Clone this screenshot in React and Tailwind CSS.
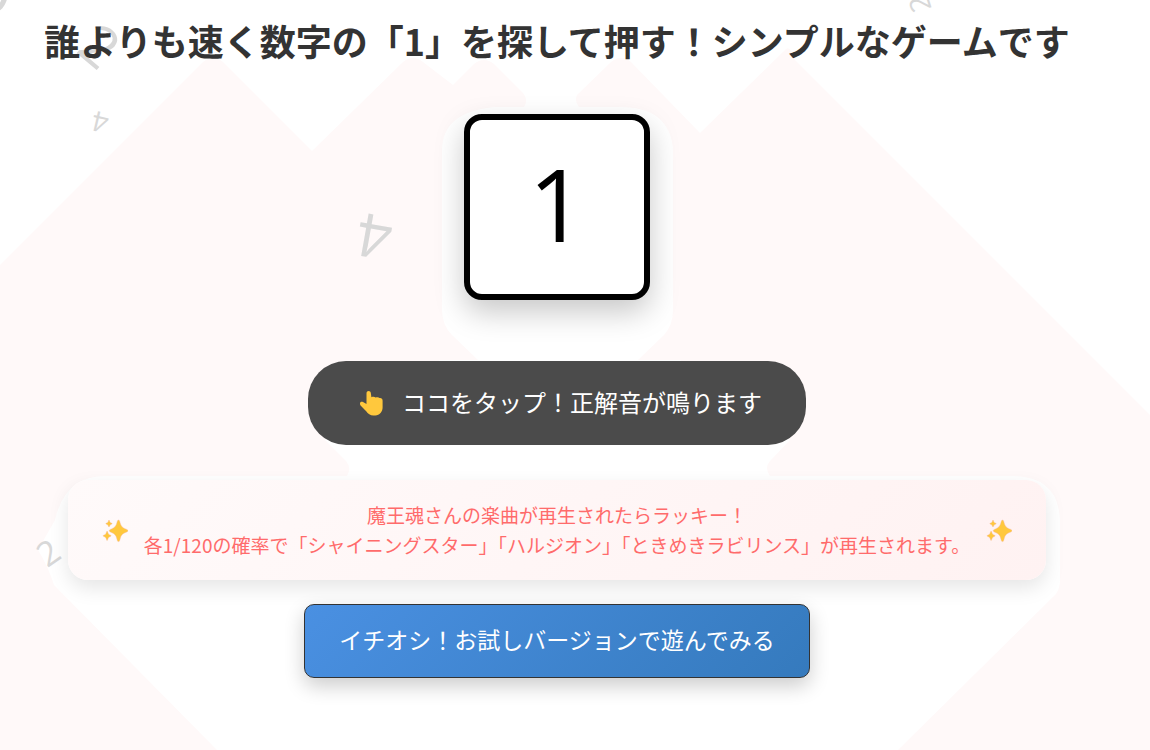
import React from "react";
import clsx from "clsx";

const floatingDigits = [
  { digit: "0", className: "-left-6 -top-11 text-[64px] rotate-[10deg] font-medium" },
  { digit: "2", className: "left-[85px] top-[17px] text-[56px] rotate-[40deg] font-medium" },
  { digit: "4", className: "left-[92px] top-[109px] text-[28px] rotate-[193deg]" },
  { digit: "4", className: "left-[357px] top-[208px] text-[60px] rotate-[190deg] font-medium" },
  { digit: "2", className: "left-[38px] top-[535px] text-[34px] -rotate-[35deg]" },
  { digit: "2", className: "left-[911px] -top-2.5 text-[28px] -rotate-[107deg]" },
];

const PointerIcon = () => (
  <svg viewBox="0 0 28 28" className="w-7 h-7" aria-hidden="true">
    <path
      d="M10.5 13.5V4.4C10.5 1.2 14.7 1.2 14.9 4.4L15.4 8.2C16.8 7.6 18.6 7.6 19.6 8.5C21 8 22.6 8 23.6 9C25.4 8.8 26.6 9.8 26.6 11.8V18.5C26.6 22.7 23.6 26.4 19.3 26.4H17.4C14.2 26.4 12 24.7 10.2 22.2L4.8 16.8C3 14.7 4.4 12 7 13.1L10.5 15Z"
      fill="#ffc83d"
    />
  </svg>
);

const SparklesIcon = () => (
  <svg viewBox="0 0 26 26" className="w-[26px] h-[26px] shrink-0" aria-hidden="true">
    <g fill="#ffc83d" stroke="#f4b8b0" strokeWidth="0.4">
      <path d="M16.5 3C17.4 3 17.7 4 18.2 6C19 9 20.2 10.4 23 11.7C25 12.5 26 12.9 26 13.7C26 14.6 25 14.9 23 15.7C20.2 16.9 19 18.3 18.2 21.7C17.7 23.6 17.4 24.6 16.5 24.6C15.6 24.6 15.3 23.6 14.8 21.7C14 18.3 12.7 16.9 10 15.7C8.2 14.9 7.2 14.6 7.2 13.7C7.2 12.9 8.2 12.5 10 11.7C12.7 10.4 14 9 14.8 6C15.3 4 15.6 3 16.5 3Z" />
      <path d="M7 3C7.4 3 7.7 5 8.3 5.5C8.8 6 10.2 6.2 10.2 6.7C10.2 7.2 8.8 7.4 8.3 7.9C7.7 8.5 7.4 10 7 10C6.6 10 6.3 8.5 5.7 7.9C5.2 7.4 3.8 7.2 3.8 6.7C3.8 6.2 5.2 6 5.7 5.5C6.3 5 6.6 3 7 3Z" />
      <path d="M5.1 14C5.6 14 6 16.5 6.7 17.2C7.4 17.9 9.2 18.2 9.2 18.8C9.2 19.4 7.4 19.7 6.7 20.4C6 21.1 5.6 23.5 5.1 23.5C4.6 23.5 4.2 21.1 3.5 20.4C2.8 19.7 1 19.4 1 18.8C1 18.2 2.8 17.9 3.5 17.2C4.2 16.5 4.6 14 5.1 14Z" />
    </g>
  </svg>
);

// Pale pink peaks behind the content
const Backdrop = () => (
  <svg
    viewBox="0 0 1150 750"
    className="absolute left-0 top-0 w-full min-w-[1150px]"
    aria-hidden="true"
  >
    <g fill="#fff9f9">
      <path d="M0 265L203 62Q213 54 223 62L312 151L403 62Q413 54 423 62L453 85L474 64Q484 56 494 64L522 92Q529 99 524 107H495Q442 112 442 150V310Q442 325 452 335L478 360H440L325 440L346 461Q352 468 347 476H105Q65 476 55 520L38 550Q48 566 54 585L217 750H0Z" />
      <path d="M577 95L611 62Q621 54 631 62L700 133L785 50Q790 44 795 60L1150 415V750H898L1056 594Q1060 588 1060 580V520Q1058 476 1012 476H770Q764 468 770 461L790 440L680 360H638L664 335Q673 325 673 310V150Q670 107 620 107H579Q574 101 577 95Z" />
    </g>
  </svg>
);

const FloatingDigits = () => (
  <div
    className="absolute inset-0 text-[#d8d8d8] font-['Open_Sans',sans-serif]"
    aria-hidden="true"
  >
    {floatingDigits.map((item, index) => (
      <span key={index} className={clsx("absolute leading-none", item.className)}>
        {item.digit}
      </span>
    ))}
  </div>
);

const App = () => {
  return (
    <div className="relative min-h-screen overflow-hidden bg-white font-['Noto_Sans_CJK_JP',sans-serif]">
      <Backdrop />
      <FloatingDigits />
      <main className="relative flex flex-col items-center pt-4 pr-9 pb-[72px]">
        <h1 className="text-4xl leading-[48px] font-bold text-[#333] whitespace-nowrap">
          誰よりも速く数字の「1」を探して押す！シンプルなゲームです
        </h1>

        {/* Number tile */}
        <button
          type="button"
          className="mt-[50px] w-[186px] h-[186px] pb-2 flex items-center justify-center bg-white border-6 border-black rounded-[18px] shadow-[0_12px_30px_rgba(0,0,0,0.22)] text-black text-[100px] leading-none font-['Open_Sans',sans-serif]"
        >
          1
        </button>

        <div className="mt-[61px] h-[84px] pl-12 pr-11 flex items-center gap-[18px] rounded-[38px] bg-[#4b4b4b] text-white text-2xl whitespace-nowrap">
          <PointerIcon />
          <span className="pb-0.5">ココをタップ！正解音が鳴ります</span>
        </div>

        {/* Lucky song notice */}
        <div className="mt-[35px] px-[34px] py-5 flex items-center gap-4 rounded-[20px] bg-linear-[135deg] from-[#fffafa] to-[#fff2f2] shadow-[0_8px_20px_rgba(0,0,0,0.1)]">
          <SparklesIcon />
          <p className="text-center text-[19px] leading-[30px] text-[#ff6b6b] whitespace-nowrap">
            魔王魂さんの楽曲が再生されたらラッキー！
            <br />
            各1/120の確率で「シャイニングスター」「ハルジオン」「ときめきラビリンス」が再生されます。
          </p>
          <SparklesIcon />
        </div>

        <button
          type="button"
          className="mt-6 h-[74px] px-[34px] pb-1 rounded-[10px] border border-[#333] bg-linear-[135deg] from-[#4a90e2] to-[#357abd] text-white text-[23px] whitespace-nowrap shadow-[0_8px_20px_rgba(0,0,0,0.2)]"
        >
          イチオシ！お試しバージョンで遊んでみる
        </button>
      </main>
    </div>
  );
};

export default App;
